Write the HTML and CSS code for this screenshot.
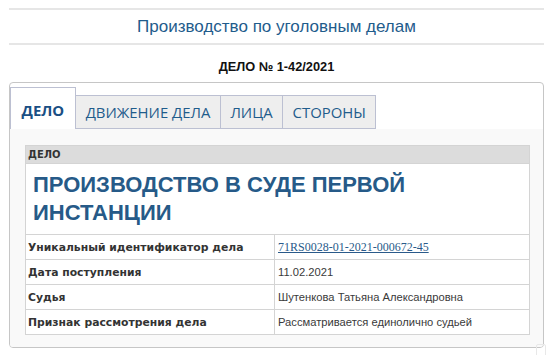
FILE: index.html
```html
<!DOCTYPE html>
<html lang="ru">
<head>
<meta charset="utf-8">
<title>Производство по уголовным делам</title>
<link rel="stylesheet" href="styles.css">
</head>
<body>
<div class="page">
  <h1 class="title">Производство по уголовным делам</h1>
  <div class="case-no">ДЕЛО № 1-42/2021</div>
  <div class="box">
    <ul class="tabs">
      <li class="tab active">ДЕЛО</li>
      <li class="tab">ДВИЖЕНИЕ ДЕЛА</li>
      <li class="tab">ЛИЦА</li>
      <li class="tab">СТОРОНЫ</li>
    </ul>
    <div class="panel">
      <table class="info">
        <tr><th class="hdr" colspan="2">ДЕЛО</th></tr>
        <tr><td class="big" colspan="2">ПРОИЗВОДСТВО В СУДЕ ПЕРВОЙ ИНСТАНЦИИ</td></tr>
        <tr><td class="lbl">Уникальный идентификатор дела</td><td class="val"><a class="uid" href="#">71RS0028-01-2021-000672-45</a></td></tr>
        <tr><td class="lbl">Дата поступления</td><td class="val">11.02.2021</td></tr>
        <tr><td class="lbl">Судья</td><td class="val">Шутенкова Татьяна Александровна</td></tr>
        <tr><td class="lbl">Признак рассмотрения дела</td><td class="val">Рассматривается единолично судьей</td></tr>
      </table>
    </div>
  </div>
</div>
<div class="totop"></div>
</body>
</html>
```

FILE: styles.css
```css
html, body {
  margin: 0;
  padding: 0;
  background: #fff;
}
body {
  font-family: "Liberation Sans", Arial, sans-serif;
  color: #333;
  position: relative;
  height: 355px;
  overflow: hidden;
}
.page {
  width: 535px;
  margin-left: 9px;
  padding-top: 8px;
}
.title {
  margin: 0;
  border-top: 2px solid #e6e6e6;
  border-bottom: 2px solid #e6e6e6;
  height: 33px;
  line-height: 33px;
  text-align: center;
  font-weight: normal;
  font-size: 17px;
  color: #1f5c8c;
}
.case-no {
  margin-top: 14px;
  text-align: center;
  font-weight: bold;
  font-size: 12.8px;
  color: #111;
  line-height: 16px;
}
.box {
  margin-top: 7px;
  border: 1px solid #c6c6c6;
  border-radius: 4px;
  height: 264px;
  overflow: hidden;
}
.tabs {
  list-style: none;
  margin: 0;
  padding: 4px 0 0 0;
  display: flex;
  align-items: flex-end;
}
.tab {
  font-family: "Open Sans", sans-serif;
  font-size: 14.9px;
  color: #1f5c8c;
  background: #eeeeee;
  border: 1px solid #bcc0d2;
  border-left: none;
  height: 32px;
  line-height: 32px;
  padding: 0 9.5px;
}
.tab.active {
  background: #fff;
  border-left: 1px solid #bcc0d2;
  border-bottom: none;
  height: 41px;
  line-height: 44px;
  font-weight: bold;
  padding: 0 11px 0 10.5px;
  color: #1a4f84;
}
.panel {
  background: #f9f9f9;
  padding: 16px 13px 15px 15px;
  height: 220px;
  box-sizing: border-box;
}
.info {
  width: 505px;
  border-collapse: collapse;
  background: #fff;
}
.info th, .info td {
  border: 1px solid #d4d4d4;
  text-align: left;
  vertical-align: middle;
}
.hdr {
  background: #dcdcdc;
  font-family: "DejaVu Sans", sans-serif;
  font-size: 10px;
  font-weight: bold;
  height: 17px;
  padding: 0 2px;
  color: #333;
}
.big {
  font-family: "Liberation Sans", Arial, sans-serif;
  font-weight: bold;
  font-size: 22px;
  line-height: 28px;
  color: #265a88;
  padding: 7px 7px 7px 7px;
  height: 56px;
}
.lbl {
  width: 244px;
  font-family: "DejaVu Sans", sans-serif;
  font-size: 10.8px;
  font-weight: bold;
  color: #333;
  height: 24px;
  padding: 0 2px;
}
.val {
  font-size: 11.2px;
  color: #3a3a3a;
  padding: 0 3px;
}
.uid {
  font-family: "Liberation Serif", "Times New Roman", serif;
  font-size: 12px;
  color: #2a5a8a;
}
.totop {
  position: absolute;
  left: 536px;
  top: 344px;
  width: 8px;
  height: 12px;
  border: 1px solid #e8e8e8;
  border-radius: 2px;
}
```
